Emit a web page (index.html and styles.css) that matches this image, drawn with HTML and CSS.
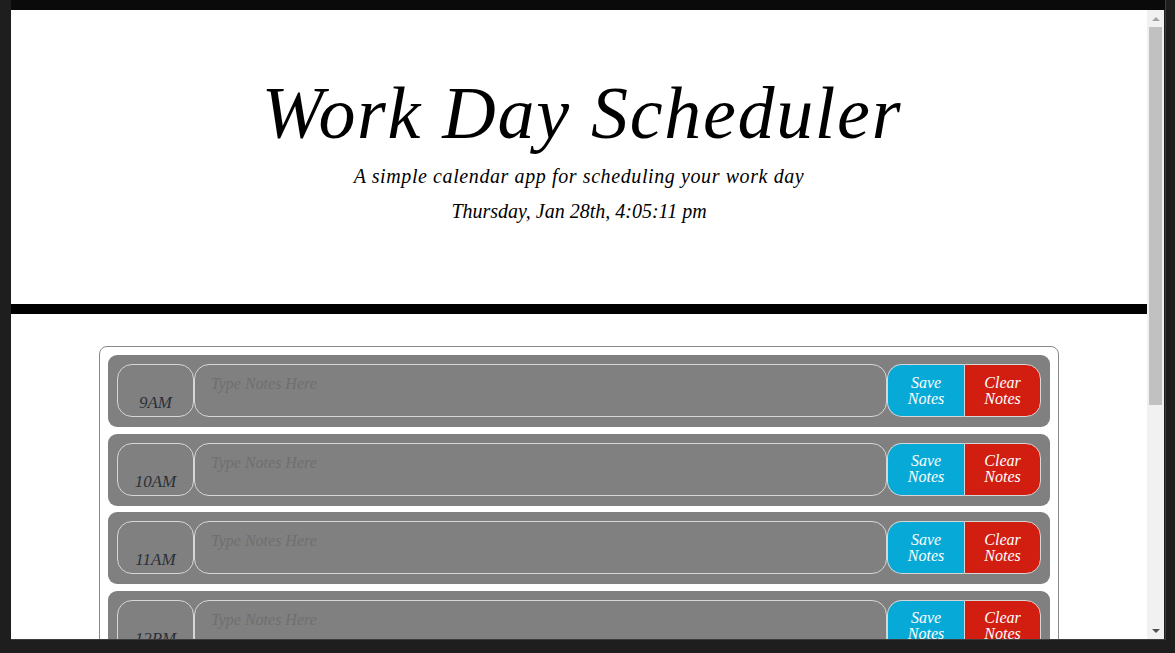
FILE: index.html
```html
<!DOCTYPE html>
<html lang="en">
<head>
<meta charset="utf-8">
<title>Work Day Scheduler</title>
<link rel="stylesheet" href="styles.css">
</head>
<body>
<div class="window">
  <div class="topbar"></div>
  <div class="frame">
    <div class="viewport">
      <header class="jumbotron">
        <h1 class="title">Work Day Scheduler</h1>
        <p class="lead">A simple calendar app for scheduling your work day</p>
        <p class="lead date">Thursday, Jan 28th, 4:05:11 pm</p>
      </header>
      <main class="container">
        <div class="row">
          <div class="hour">9AM</div>
          <textarea class="notes" placeholder="Type Notes Here"></textarea>
          <button class="btn save">Save<br>Notes</button>
          <button class="btn clear">Clear<br>Notes</button>
        </div>
        <div class="row">
          <div class="hour">10AM</div>
          <textarea class="notes" placeholder="Type Notes Here"></textarea>
          <button class="btn save">Save<br>Notes</button>
          <button class="btn clear">Clear<br>Notes</button>
        </div>
        <div class="row">
          <div class="hour">11AM</div>
          <textarea class="notes" placeholder="Type Notes Here"></textarea>
          <button class="btn save">Save<br>Notes</button>
          <button class="btn clear">Clear<br>Notes</button>
        </div>
        <div class="row">
          <div class="hour">12PM</div>
          <textarea class="notes" placeholder="Type Notes Here"></textarea>
          <button class="btn save">Save<br>Notes</button>
          <button class="btn clear">Clear<br>Notes</button>
        </div>
        <div class="row">
          <div class="hour">1PM</div>
          <textarea class="notes" placeholder="Type Notes Here"></textarea>
          <button class="btn save">Save<br>Notes</button>
          <button class="btn clear">Clear<br>Notes</button>
        </div>
      </main>
    </div>
    <div class="scrollbar">
      <div class="arrow up"></div>
      <div class="track"><div class="thumb"></div></div>
      <div class="arrow down"></div>
    </div>
  </div>
</div>
</body>
</html>
```

FILE: styles.css
```css
html, body {
  margin: 0;
  padding: 0;
}
body {
  background: #1e1e1e;
  width: 1175px;
  height: 653px;
  overflow: hidden;
  padding: 0 0 0 11px;
  box-sizing: border-box;
  font-family: "Liberation Serif", "DejaVu Serif", serif;
}
.window {
  width: 1154px;
  border-right: 1px solid #3c3c3c;
  border-bottom: 1px solid #3c3c3c;
}
.topbar {
  height: 10px;
  background: #0a0a0a;
}
.frame {
  display: flex;
  height: 629px;
}
.viewport {
  width: 1136px;
  height: 629px;
  overflow: hidden;
  background: #fff;
}
.jumbotron {
  border-bottom: 10px solid #000;
  display: flex;
  flex-direction: column;
  align-items: center;
  padding-top: 60px;
  box-sizing: content-box;
  height: 234px;
  font-style: italic;
  color: #000;
}
.title {
  margin: 0 0 0 6px;
  font-size: 74px;
  font-weight: normal;
  line-height: 86px;
  letter-spacing: 1.7px;
}
.lead {
  margin: 4px 0 0;
  font-size: 20px;
  line-height: 32px;
  letter-spacing: 0.6px;
}
.date {
  margin-top: 3px;
  letter-spacing: 0;
}
.container {
  width: 960px;
  box-sizing: border-box;
  margin: 32px auto 0;
  border: 1px solid #8a8a8a;
  border-radius: 8px;
  padding: 8px;
  display: flex;
  flex-direction: column;
  gap: 6.5px;
}
.row {
  background: #808080;
  border-radius: 9px;
  height: 72px;
  box-sizing: border-box;
  padding: 9px 9px 10px;
  display: flex;
  font-style: italic;
}
.hour {
  width: 77px;
  box-sizing: border-box;
  border: 1px solid #d6d6d6;
  border-radius: 15px;
  display: flex;
  align-items: flex-end;
  justify-content: center;
  padding-bottom: 3px;
  font-size: 17px;
  color: #2c3038;
}
.notes {
  flex: 1;
  margin: 0;
  box-sizing: border-box;
  background: transparent;
  border: 1px solid #d6d6d6;
  border-radius: 15px;
  padding: 10px 16px;
  resize: none;
  font-family: "Liberation Serif", "DejaVu Serif", serif;
  font-style: italic;
  font-size: 16px;
  color: #333;
  outline: none;
}
.notes::placeholder {
  color: #6f6f6f;
}
.btn {
  width: 77px;
  margin: 0;
  box-sizing: border-box;
  border: 1px solid #d6d6d6;
  color: #fff;
  font-family: "Liberation Serif", "DejaVu Serif", serif;
  font-style: italic;
  font-size: 16px;
  line-height: 16px;
  padding: 0;
  cursor: pointer;
}
.save {
  background: #07aad6;
  border-radius: 15px 0 0 15px;
  border-right: none;
}
.clear {
  background: #d11e10;
  border-radius: 0 15px 15px 0;
}
.scrollbar {
  width: 17px;
  background: #f1f1f1;
  display: flex;
  flex-direction: column;
}
.arrow {
  height: 17px;
  display: flex;
  align-items: center;
  justify-content: center;
}
.arrow::before {
  content: "";
  width: 0;
  height: 0;
  border-left: 4px solid transparent;
  border-right: 4px solid transparent;
}
.up::before {
  border-bottom: 4px solid #a3a3a3;
}
.down::before {
  border-top: 4px solid #505050;
}
.track {
  flex: 1;
  padding: 0 2px;
}
.thumb {
  height: 378px;
  background: #c1c1c1;
}
```
